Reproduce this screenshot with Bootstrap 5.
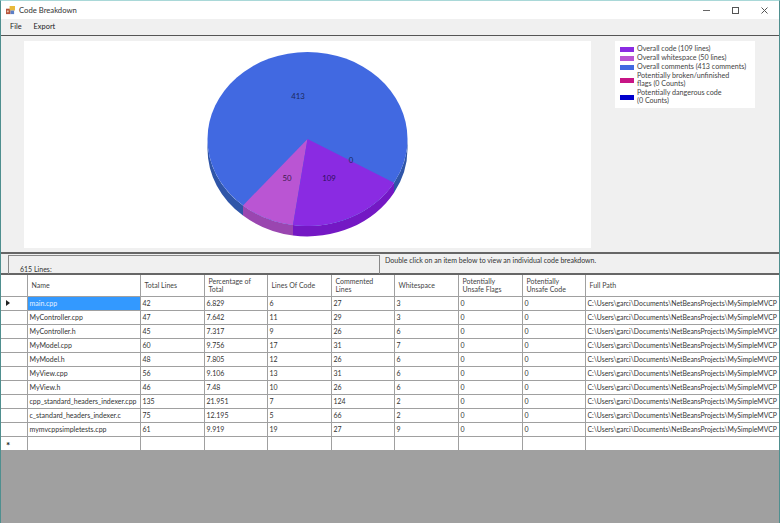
<!DOCTYPE html>
<html lang="en">
<head>
  <meta charset="UTF-8" />
  <title>Code Breakdown</title>
  <link href="https://cdn.jsdelivr.net/npm/bootstrap@5.3.6/dist/css/bootstrap.min.css" rel="stylesheet"/>
  <style>
    html, body { height: 100%; overflow: hidden; }
    body {
      font-family: "Lato", "Liberation Sans", sans-serif;
      font-size: 7px;
      line-height: 1;
      color: #333;
      background: #f0f0f0;
    }
    .app-window {
      width: 780px;
      height: 523px;
      border-top: 1px solid #a9d8d8;
      border-left: 1px solid #4f8f8f;
      border-right: 1px solid #4f8f8f;
    }
    .title-bar { height: 18px; background: #fff; padding: 1px 0 0 5px; font-size: 7.7px; }
    .win-btns { gap: 22px; padding-right: 11px; }
    .menu-bar { height: 17px; background: #f0f0f0; padding-left: 9px; gap: 12px; border-bottom: 1px solid #555; font-size: 7.4px; color: #222; }
    .chart-panel { height: 218px; padding: 5px 0 0 23px; border-bottom: 2px solid #666; background: #f0f0f0; }
    .chart-box { width: 567px; height: 207px; background: #fff; }
    .legend-box { width: 140px; height: 67px; background: #fff; margin-left: 24px; padding: 4px 5px; gap: 1px; }
    .legend-row { gap: 3px; line-height: 8px; color: #444; font-size: 7.15px; }
    .legend-swatch { width: 14px; height: 5px; flex: none; }
    .status-row { height: 21px; border-bottom: 2px solid #666; }
    .lines-box { width: 372px; height: 19px; margin: 1px 0 0 7px; border: 1px solid #888; border-bottom: 0; padding: 10px 0 0 11px; }
    .hint-text { padding: 3px 0 0 5px; }
    .grid-wrap { height: 175px; background: #fff; overflow: hidden; }
    .data-grid { table-layout: fixed; width: 778px; border-collapse: collapse; }
    .data-grid th, .data-grid td {
      border-right: 1px solid #a0a0a0;
      border-bottom: 1px solid #a0a0a0;
      padding: 1px 0 0 2px;
      white-space: nowrap;
      overflow: hidden;
      height: 14px;
      font-weight: 400;
      color: #333;
    }
    .data-grid thead th { height: 21px; padding: 0 0 0 4px; line-height: 8px; vertical-align: middle; color: #444; }
    .data-grid .row-head { padding: 0 0 0 5px; text-align: left; color: #222; }
    .data-grid .new-row-mark { font-size: 10px; font-weight: 700; padding-top: 3px; }
    .data-grid td.cell-selected { background: #3399ff; color: #e6f2ff; }
    .data-grid td.path-cell { font-size: 6.85px; }
    .grid-empty { flex: 1; background: #a0a0a0; }
    .pointer-mark { display: inline-block; border-left: 4px solid #222; border-top: 3px solid transparent; border-bottom: 3px solid transparent; }
  </style>
</head>
<body>
<div class="app-window d-flex flex-column">
  <div class="title-bar d-flex align-items-center justify-content-between">
    <div class="d-flex align-items-center gap-1">
      <svg width="9" height="9" viewBox="0 0 10 10"><rect x="0" y="3" width="5" height="6" fill="#b5533c"/><rect x="4" y="0" width="6" height="5" fill="#e8b93a"/><rect x="5" y="5" width="4" height="4" fill="#5b7fc7"/><rect x="1" y="5" width="2" height="2" fill="#e9c9b0"/></svg>
      <span>Code Breakdown</span>
    </div>
    <div class="d-flex align-items-center win-btns">
      <svg width="7" height="7" viewBox="0 0 7 7"><path d="M0 3.500h7" stroke="#666" fill="none"/></svg>
      <svg width="7" height="7" viewBox="0 0 7 7"><rect x=".5" y=".5" width="6" height="6" stroke="#555" fill="none"/></svg>
      <svg width="7" height="7" viewBox="0 0 7 7"><path d="M.5.5l6 6M6.500.5l-6 6" stroke="#555" fill="none"/></svg>
    </div>
  </div>
  <div class="menu-bar d-flex align-items-center"><span>File</span><span>Export</span></div>

  <div class="chart-panel d-flex align-items-start">
    <div class="chart-box">
      <svg width="567" height="207" viewBox="24 41 567 207">
        <!-- walls of the pie -->
        <path d="M207.500 139A100 87 0 0 0 243 205.500L243 215.500A100 87 0 0 1 207.500 149Z" fill="#2f55a8"/>
        <path d="M243 205.500A100 87 0 0 0 293 225L293 235.500A100 87 0 0 1 243 215.500Z" fill="#9a46b0"/>
        <path d="M293 225A100 87 0 0 0 394 182.700L394 192.700A100 87 0 0 1 293 235.500Z" fill="#7418c4"/>
        <path d="M394 182.700A100 87 0 0 0 407.500 139L407.500 149A100 87 0 0 1 394 192.700Z" fill="#2f55a8"/>
        <!-- top face -->
        <ellipse cx="307.500" cy="139" rx="100" ry="87" fill="#4169e1"/>
        <path d="M307.500 139L243 205.500A100 87 0 0 0 293 225Z" fill="#ba55d3"/>
        <path d="M307.500 139L293 225A100 87 0 0 0 394 182.700Z" fill="#8a2be2"/>
        <text x="298" y="99" font-size="7.800" text-anchor="middle" fill="#1c2a5c">413</text>
        <text x="351" y="163" font-size="7.800" text-anchor="middle" fill="#1c2a5c">0</text>
        <text x="287" y="181" font-size="7.800" text-anchor="middle" fill="#3d1a50">50</text>
        <text x="329" y="181" font-size="7.800" text-anchor="middle" fill="#2e0f60">109</text>
      </svg>
    </div>
    <div class="legend-box d-flex flex-column">
      <div class="legend-row d-flex align-items-center"><span class="legend-swatch" style="background:#8a2be2"></span><span>Overall code (109 lines)</span></div>
      <div class="legend-row d-flex align-items-center"><span class="legend-swatch" style="background:#ba55d3"></span><span>Overall whitespace (50 lines)</span></div>
      <div class="legend-row d-flex align-items-center"><span class="legend-swatch" style="background:#4169e1"></span><span>Overall comments (413 comments)</span></div>
      <div class="legend-row d-flex align-items-center"><span class="legend-swatch" style="background:#c71585"></span><span>Potentially broken/unfinished<br>flags (0 Counts)</span></div>
      <div class="legend-row d-flex align-items-center"><span class="legend-swatch" style="background:#0000cd"></span><span>Potentially dangerous code<br>(0 Counts)</span></div>
    </div>
  </div>

  <div class="status-row d-flex">
    <div class="lines-box">615 Lines:</div>
    <div class="hint-text">Double click on an item below to view an individual code breakdown.</div>
  </div>

  <div class="grid-wrap">
    <table class="data-grid" id="grid">
      <colgroup>
        <col style="width:26px"><col style="width:113px"><col style="width:64px"><col style="width:63px"><col style="width:64px"><col style="width:63px"><col style="width:64px"><col style="width:64px"><col style="width:63px"><col style="width:194px">
      </colgroup>
      <thead>
        <tr><th></th><th>Name</th><th>Total Lines</th><th>Percentage of<br>Total</th><th>Lines Of Code</th><th>Commented<br>Lines</th><th>Whitespace</th><th>Potentially<br>Unsafe Flags</th><th>Potentially<br>Unsafe Code</th><th>Full Path</th></tr>
      </thead>
      <tbody id="grid-body"></tbody>
    </table>
  </div>
  <div class="grid-empty"></div>
</div>

<script src="https://cdn.jsdelivr.net/npm/bootstrap@5.3.6/dist/js/bootstrap.bundle.min.js"></script>
<script>
  const rows = [
    ["main.cpp", 42, "6.829", 6, 27, 3],
    ["MyController.cpp", 47, "7.642", 11, 29, 3],
    ["MyController.h", 45, "7.317", 9, 26, 6],
    ["MyModel.cpp", 60, "9.756", 17, 31, 7],
    ["MyModel.h", 48, "7.805", 12, 26, 6],
    ["MyView.cpp", 56, "9.106", 13, 31, 6],
    ["MyView.h", 46, "7.48", 10, 26, 6],
    ["cpp_standard_headers_indexer.cpp", 135, "21.951", 7, 124, 2],
    ["c_standard_headers_indexer.c", 75, "12.195", 5, 66, 2],
    ["mymvcppsimpletests.cpp", 61, "9.919", 19, 27, 9]
  ];
  const path = "C:\\Users\\garci\\Documents\\NetBeansProjects\\MySimpleMVCP";

  let html = "";
  rows.forEach((r, i) => {
    html += `<tr>
      <td class="row-head">${i === 0 ? '<span class="pointer-mark"></span>' : ""}</td>
      <td${i === 0 ? ' class="cell-selected"' : ""}>${r[0]}</td>
      <td>${r[1]}</td><td>${r[2]}</td><td>${r[3]}</td><td>${r[4]}</td><td>${r[5]}</td>
      <td>0</td><td>0</td><td class="path-cell">${path}</td></tr>`;
  });
  html += `<tr><td class="row-head new-row-mark">*</td><td></td><td></td><td></td><td></td><td></td><td></td><td></td><td></td><td></td></tr>`;
  document.getElementById("grid-body").innerHTML = html;
</script>
</body>
</html>
